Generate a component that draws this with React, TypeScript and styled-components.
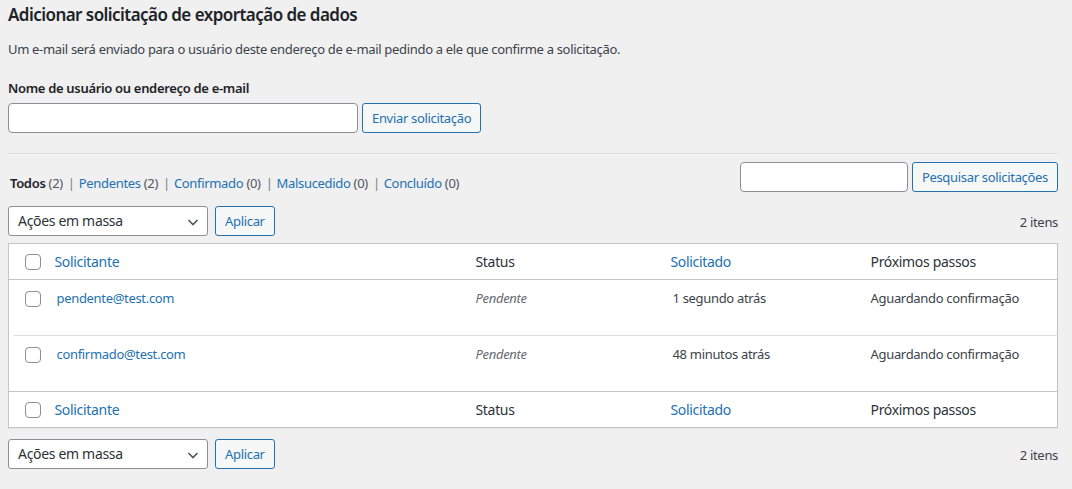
import * as React from 'react';
import styled, { createGlobalStyle } from 'styled-components';

const GlobalStyle = createGlobalStyle`
  html, body {
    margin: 0;
    padding: 0;
    background: #f0f0f1;
  }
  body {
    font-family: 'Noto Sans', 'Liberation Sans', sans-serif;
    font-size: 13px;
    line-height: 1.4em;
    letter-spacing: -0.32px;
    color: #3c434a;
  }
  * {
    box-sizing: border-box;
  }
`;

const Wrap = styled.div`
  padding: 0 14px 0 8px;
`;

const Title = styled.h2`
  margin: 0;
  padding: 3px 0 0;
  font-size: 17px;
  font-weight: 600;
  line-height: 24px;
  letter-spacing: -0.55px;
  color: #1d2327;
`;

const Description = styled.p`
  margin: 10px 0 0;
  line-height: 24px;
`;

const FieldLabel = styled.label`
  display: block;
  margin-top: 15px;
  font-weight: 600;
  color: #1d2327;
  line-height: 24px;
`;

const FieldRow = styled.div`
  display: flex;
  gap: 4px;
  margin-top: 3px;
`;

const TextInput = styled.input<{ $width: number }>`
  width: ${(p) => p.$width}px;
  height: 30px;
  margin: 0;
  padding: 0 8px;
  background: #fff;
  border: 1px solid #8c8f94;
  border-radius: 4px;
  font: inherit;
  color: #2c3338;
`;

const Button = styled.button`
  height: 30px;
  margin: 0;
  padding: 0 9px;
  background: #f6f7f7;
  border: 1px solid #2271b1;
  border-radius: 3px;
  color: #2271b1;
  font: inherit;
  letter-spacing: inherit;
  line-height: 28px;
  white-space: nowrap;
  cursor: pointer;
`;

const Divider = styled.hr`
  margin: 20px 0 0;
  border: 0;
  border-top: 1px solid #dcdcde;
  border-bottom: 1px solid #f6f7f7;
`;

const FilterBar = styled.div`
  display: flex;
  justify-content: space-between;
  align-items: flex-start;
  margin-top: 7px;
`;

const ViewList = styled.ul`
  display: flex;
  margin: 12px 0 0 2px;
  padding: 0;
  list-style: none;
  color: #646970;
`;

const ViewItem = styled.li`
  white-space: pre;
`;

const Separator = styled.span`
  padding: 0 4px 0 5px;
  color: #787c82;
`;

const ViewLink = styled.a<{ $current?: boolean }>`
  color: ${(p) => (p.$current ? '#1d2327' : '#2271b1')};
  font-weight: ${(p) => (p.$current ? 600 : 400)};
  text-decoration: none;
`;

const Count = styled.span`
  color: #50575e;
`;

const SearchBox = styled.div`
  display: flex;
  gap: 4px;
`;

const TableNav = styled.div<{ $top?: boolean }>`
  display: flex;
  align-items: center;
  justify-content: space-between;
  margin: ${(p) => (p.$top ? '14px 0 7px' : '11px 0 0')};
`;

const Actions = styled.div`
  display: flex;
  gap: 7px;
`;

const SelectBox = styled.div`
  position: relative;
  width: 200px;
  height: 30px;
  padding: 0 24px 0 9px;
  background: #fff;
  border: 1px solid #8c8f94;
  border-radius: 3px;
  color: #2c3338;
  line-height: 28px;
  font-size: 14px;
`;

const Chevron = styled.svg`
  position: absolute;
  right: 8px;
  top: 9px;
`;

const ItemCount = styled.span`
  color: #3c434a;
  padding-top: 2px;
`;

const Table = styled.table`
  width: 100%;
  border-collapse: collapse;
  border-spacing: 0;
  table-layout: fixed;
  background: #fff;
  border: 1px solid #c3c4c7;
  box-shadow: 0 1px 1px rgba(0, 0, 0, 0.04);
`;

const HeadCell = styled.th<{ $width?: number; $sortable?: boolean }>`
  ${(p) => (p.$width ? `width: ${p.$width}px;` : '')}
  height: 36px;
  padding: 0 8px;
  text-align: left;
  font-weight: 400;
  font-size: 14px;
  color: ${(p) => (p.$sortable ? '#2271b1' : '#2c3338')};
  vertical-align: middle;
`;

const HeadRow = styled.tr<{ $foot?: boolean }>`
  ${(p) => (p.$foot ? 'border-top: 1px solid #c3c4c7;' : 'border-bottom: 1px solid #c3c4c7;')}
`;

const Cell = styled.td<{ $indent?: number; $italic?: boolean; $link?: boolean; $line?: boolean }>`
  height: 56px;
  padding: 8px 8px 8px ${(p) => 8 + (p.$indent || 0)}px;
  vertical-align: top;
  line-height: 20px;
  color: ${(p) => (p.$link ? '#2271b1' : p.$italic ? '#646970' : '#3c434a')};
  font-style: ${(p) => (p.$italic ? 'italic' : 'normal')};
  ${(p) => (p.$line ? 'border-bottom: 1px solid #dcdcde;' : '')}
`;

const CheckCell = styled.td<{ $line?: boolean }>`
  padding: 11px 0 0 16px;
  vertical-align: top;
  ${(p) =>
    p.$line
      ? 'background: linear-gradient(#dcdcde, #dcdcde) no-repeat 5px 100% / calc(100% - 5px) 1px;'
      : ''}
`;

const CheckBox = styled.span`
  display: block;
  width: 16px;
  height: 16px;
  background: #fff;
  border: 1px solid #8c8f94;
  border-radius: 4px;
`;

const HeadCheck = styled.th`
  width: 38px;
  padding: 0 0 0 16px;
  vertical-align: middle;
`;

const rows = [
  { email: 'pendente@test.com', status: 'Pendente', when: '1 segundo atrás', next: 'Aguardando confirmação' },
  { email: 'confirmado@test.com', status: 'Pendente', when: '48 minutos atrás', next: 'Aguardando confirmação' },
];

const views = [
  { label: 'Todos', count: 2, current: true },
  { label: 'Pendentes', count: 2 },
  { label: 'Confirmado', count: 0 },
  { label: 'Malsucedido', count: 0 },
  { label: 'Concluído', count: 0 },
];

function BulkActions() {
  return (
    <Actions>
      <SelectBox>
        Ações em massa
        <Chevron width="12" height="12" viewBox="0 0 12 12">
          <path d="M1.5 4l4.5 4.5L10.5 4" fill="none" stroke="#50575e" strokeWidth="1.6" />
        </Chevron>
      </SelectBox>
      <Button>Aplicar</Button>
    </Actions>
  );
}

function HeaderRow({ foot }: { foot?: boolean }) {
  return (
    <HeadRow $foot={foot}>
      <HeadCheck>
        <CheckBox />
      </HeadCheck>
      <HeadCell $width={421} $sortable>Solicitante</HeadCell>
      <HeadCell $width={195}>Status</HeadCell>
      <HeadCell $width={200} $sortable>Solicitado</HeadCell>
      <HeadCell>Próximos passos</HeadCell>
    </HeadRow>
  );
}

export default function App() {
  return (
    <Wrap>
      <GlobalStyle />
      <Title>Adicionar solicitação de exportação de dados</Title>
      <Description>
        Um e-mail será enviado para o usuário deste endereço de e-mail pedindo a ele que confirme a solicitação.
      </Description>
      <FieldLabel>Nome de usuário ou endereço de e-mail</FieldLabel>
      <FieldRow>
        <TextInput $width={350} />
        <Button>Enviar solicitação</Button>
      </FieldRow>
      <Divider />

      <FilterBar>
        <ViewList>
          {views.map((v, i) => (
            <ViewItem key={v.label}>
              <ViewLink $current={v.current}>{v.label}</ViewLink> <Count>({v.count})</Count>
              {i < views.length - 1 && <Separator>|</Separator>}
            </ViewItem>
          ))}
        </ViewList>
        <SearchBox>
          <TextInput $width={168} />
          <Button>Pesquisar solicitações</Button>
        </SearchBox>
      </FilterBar>

      <TableNav $top>
        <BulkActions />
        <ItemCount>2 itens</ItemCount>
      </TableNav>

      <Table>
        <thead>
          <HeaderRow />
        </thead>
        <tbody>
          {rows.map((r, i) => {
            const line = i < rows.length - 1;
            return (
              <tr key={r.email}>
                <CheckCell $line={line}>
                  <CheckBox />
                </CheckCell>
                <Cell $link $indent={2} $line={line}>{r.email}</Cell>
                <Cell $italic $line={line}>{r.status}</Cell>
                <Cell $indent={2} $line={line}>{r.when}</Cell>
                <Cell $line={line}>{r.next}</Cell>
              </tr>
            );
          })}
        </tbody>
        <tfoot>
          <HeaderRow foot />
        </tfoot>
      </Table>

      <TableNav>
        <BulkActions />
        <ItemCount>2 itens</ItemCount>
      </TableNav>
    </Wrap>
  );
}
